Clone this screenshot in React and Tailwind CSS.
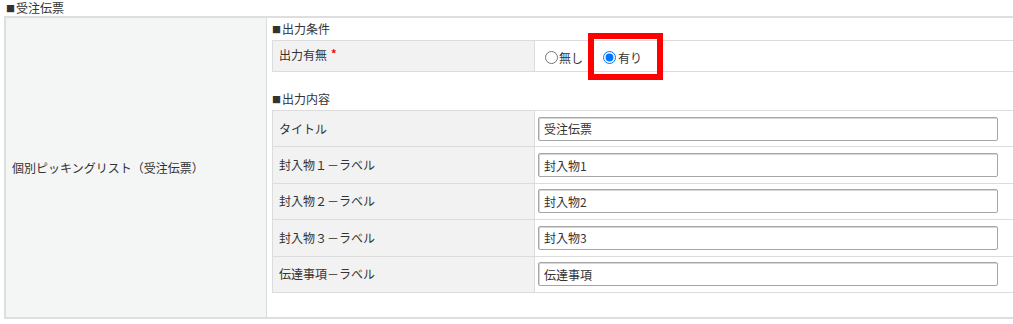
import { useState } from 'react';

const font = { fontFamily: '"Noto Sans CJK JP", "Noto Sans", sans-serif' };

const rows = [
  { label: 'タイトル', value: '受注伝票' },
  { label: '封入物１－ラベル', value: '封入物1' },
  { label: '封入物２－ラベル', value: '封入物2' },
  { label: '封入物３－ラベル', value: '封入物3' },
  { label: '伝達事項－ラベル', value: '伝達事項' },
];

function SectionTitle({ children, className = '' }) {
  return (
    <div className={`h-[22px] flex items-center text-[12px] leading-none text-[#333] ${className}`}>
      <span className="text-[9px] mr-[1px]">■</span>
      {children}
    </div>
  );
}

export default function App() {
  const [output, setOutput] = useState('yes');

  return (
    <div className="w-[1013px] h-[324px] overflow-hidden bg-white text-[#333]" style={font}>
      <div className="h-[16px] pl-[6px] flex items-center text-[12px] leading-none">
        <span className="text-[9px] mr-[1px]">■</span>受注伝票
      </div>

      <div className="ml-[4px] w-[1040px] flex border-t-2 border-l-2 border-b-2 border-[#dedede] h-[303px]">
        <div className="w-[261px] bg-[#f4f5f5] border-r border-[#dcdcdc] flex items-center pl-[6px] text-[12px]">
          個別ピッキングリスト（受注伝票）
        </div>

        <div className="flex-1 pl-[5px]">
          <SectionTitle>出力条件</SectionTitle>
          <div className="flex border border-[#dcdcdc] h-[32px]">
            <div className="w-[262px] bg-[#f2f2f2] border-r border-[#dcdcdc] pl-[6px] pt-[8px] text-[12px] leading-none">
              出力有無<span className="text-[#ff0000] text-[11px] font-bold ml-[4px] relative -top-[2px]">*</span>
            </div>
            <div className="relative flex-1 flex items-center pl-[7px] pt-[3px] text-[12px]">
              <label className="flex items-center mr-[20px]">
                <input
                  type="radio"
                  name="out"
                  checked={output === 'no'}
                  onChange={() => setOutput('no')}
                  className="m-0 w-[13px] h-[13px] mr-px ml-[3px]"
                />
                無し
              </label>
              <label className="flex items-center">
                <input
                  type="radio"
                  name="out"
                  checked={output === 'yes'}
                  onChange={() => setOutput('yes')}
                  className="m-0 w-[13px] h-[13px] mr-[2px]"
                />
                有り
              </label>
              <div className="absolute left-[53px] -top-[8px] w-[75px] h-[47px] border-[6px] border-[#ff0000] pointer-events-none" />
            </div>
          </div>

          <SectionTitle className="mt-[16px]">出力内容</SectionTitle>
          <div className="border-t border-l border-r border-[#dcdcdc]">
            {rows.map((r) => (
              <div key={r.label} className="flex border-b border-[#dcdcdc] h-[36.4px]">
                <div className="w-[262px] bg-[#f2f2f2] border-r border-[#dcdcdc] pl-[6px] flex items-center text-[12px]">
                  {r.label}
                </div>
                <div className="flex-1 flex items-center pl-[3px]">
                  <input
                    type="text"
                    defaultValue={r.value}
                    className="w-[460px] h-[24px] border border-[#a6a6a6] rounded-[2px] px-[5px] text-[12px] text-[#333] bg-white shadow-[inset_1px_1px_0_#d6d6d6]"
                    style={font}
                  />
                </div>
              </div>
            ))}
          </div>
        </div>
      </div>
    </div>
  );
}
